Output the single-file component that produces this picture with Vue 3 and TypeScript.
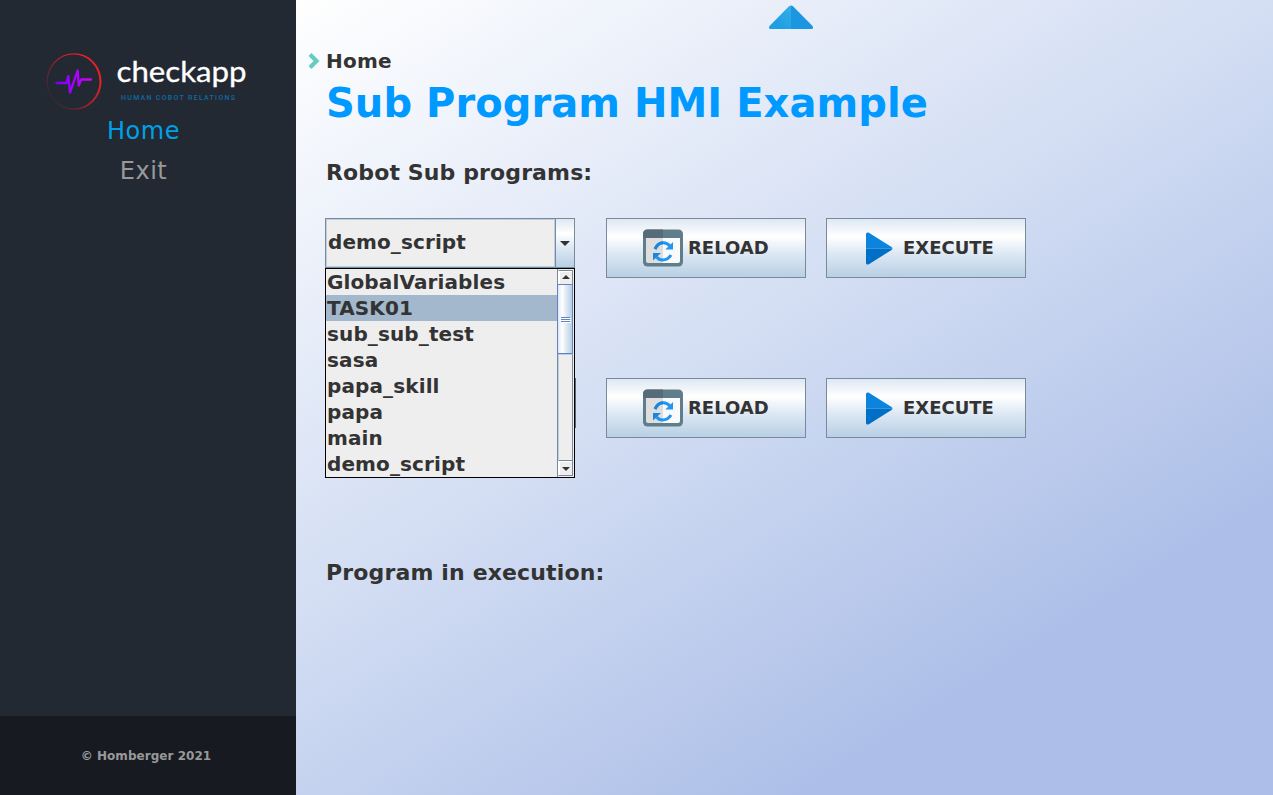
<script setup lang="ts">
import { ref } from 'vue'

const programs: string[] = ['GlobalVariables', 'TASK01', 'sub_sub_test', 'sasa', 'papa_skill', 'papa', 'main', 'demo_script']
const hovered = ref('TASK01')
const selected = ref('demo_script')
const open = ref(true)
const rows: number[] = [1, 2]

function choose(name: string) {
  selected.value = name
  open.value = false
}
</script>

<template>
  <div class="app">
    <aside class="sidebar">
      <svg class="logo" width="220" height="70" viewBox="36 44 220 70">
        <defs>
          <linearGradient id="ring" x1="0.1" y1="0.85" x2="0.85" y2="0.3">
            <stop offset="0" stop-color="#e01e26" stop-opacity="0.04" />
            <stop offset="0.5" stop-color="#e01e26" stop-opacity="0.65" />
            <stop offset="1" stop-color="#ee1f28" />
          </linearGradient>
          <linearGradient id="pulse" gradientUnits="userSpaceOnUse" x1="56" y1="80" x2="92" y2="80">
            <stop offset="0" stop-color="#7a00f0" />
            <stop offset="0.5" stop-color="#a400ff" />
            <stop offset="1" stop-color="#d800f5" />
          </linearGradient>
        </defs>
        <path fill-rule="evenodd" d="M46.500 81.500A27.500 28.300 0 1 1 101.500 81.500A27.500 28.300 0 1 1 46.500 81.500ZM47.700 81.500A25.900 27 0 1 0 99.500 81.500A25.900 27 0 1 0 47.700 81.500Z" fill="url(#ring)" />
        <path d="M56.500 83H66.500L68.300 76L70 92.500L77.700 70.500L78.700 85.500L81.300 79.500H91" fill="none" stroke="url(#pulse)" stroke-width="2.300" stroke-linejoin="round" stroke-linecap="round" />
        <text class="brand" x="116.500" y="82.300" textLength="130" lengthAdjust="spacingAndGlyphs">checkapp</text>
        <text class="tagline" x="121" y="100" textLength="114">HUMAN COBOT RELATIONS</text>
      </svg>
      <nav class="nav">
        <a class="nav-item active">Home</a>
        <a class="nav-item exit">Exit</a>
      </nav>
      <footer class="footer"><span>© Homberger 2021</span></footer>
    </aside>

    <main class="main">
      <svg class="collapse" width="46" height="26" viewBox="0 0 46 26">
        <defs>
          <linearGradient id="tri" x1="1" y1="0" x2="0.300" y2="0.700">
            <stop offset="0" stop-color="#37aee6" />
            <stop offset="1" stop-color="#1e9fe2" />
          </linearGradient>
        </defs>
        <path d="M23 0.400Q22 0.400 21 1.300L1.500 21Q0 24 2.500 24H23Z" fill="url(#tri)" />
        <path d="M23 0.400Q24 0.400 25 1.300L44.500 21Q46 24 43.500 24H23Z" fill="#1a97e0" />
      </svg>

      <div class="crumb">
        <svg class="chevron" width="12" height="16" viewBox="0 0 12 16"><path d="M2 1.500L8.500 8L2 14.500" fill="none" stroke="#65cbc4" stroke-width="4.200" /></svg>
        <span>Home</span>
      </div>
      <h1>Sub Program HMI Example</h1>
      <h2 class="robot">Robot Sub programs:</h2>

      <section v-for="row in rows" :key="row" class="row">
        <div class="combo" :class="{ second: row === 2 }">
          <div class="value">{{ row === 1 ? selected : '' }}</div>
          <button class="drop" @click="open = !open">
            <svg width="10" height="5" viewBox="0 0 10 5"><path d="M0 0H10L5 5Z" fill="#333" /></svg>
          </button>
          <div v-if="row === 1 && open" class="popup">
            <ul>
              <li v-for="p in programs" :key="p" :class="{ hover: p === hovered }" @mouseenter="hovered = p" @click="choose(p)">{{ p }}</li>
            </ul>
            <div class="scroll">
              <div class="step up"><svg width="8" height="4" viewBox="0 0 8 4"><path d="M0 4H8L4 0Z" fill="#333" /></svg></div>
              <div class="thumb"><i></i><i></i><i></i></div>
              <div class="track"></div>
              <div class="step down"><svg width="8" height="4" viewBox="0 0 8 4"><path d="M0 0H8L4 4Z" fill="#333" /></svg></div>
            </div>
          </div>
        </div>
        <button class="btn reload">
          <svg width="40" height="38" viewBox="0 0 40 38">
            <rect x="0" y="0.500" width="40" height="37" rx="4.500" fill="#607d8b" />
            <path d="M20 0.500H4.500Q0 0.500 0 5V9H20Z" fill="#546d79" />
            <path d="M3 9H20V34H5Q3 34 3 32Z" fill="#dedede" />
            <path d="M20 9H37V32Q37 34 35 34H20Z" fill="#fafafa" />
            <path d="M12 20Q15 13.800 20.500 13.800Q24 13.800 27 17" fill="none" stroke="#2196f3" stroke-width="3" />
            <path d="M30 13V20.500H22.300Z" fill="#2196f3" />
            <path d="M28 26Q25 31 19.500 31Q16 31 13.500 28" fill="none" stroke="#2196f3" stroke-width="3" />
            <path d="M10 31.500V24H18Z" fill="#1d86da" />
            <path d="M12 20Q15 13.800 20 13.800" fill="none" stroke="#1d86da" stroke-width="3" />
          </svg>
          <span>RELOAD</span>
        </button>
        <button class="btn execute">
          <svg width="27" height="33" viewBox="0 0 27 33">
            <path d="M0 16.500V2Q0 0 2.500 0.500L25.500 15Q26.500 15.800 26.500 16.500Z" fill="#0c84dd" />
            <path d="M0 16.500V31Q0 33 2.500 32.500L25.500 18Q26.500 17.200 26.500 16.500Z" fill="#006fc7" />
          </svg>
          <span>EXECUTE</span>
        </button>
      </section>

      <h2 class="status">Program in execution:</h2>
    </main>
  </div>
</template>

<style>
html, body { margin: 0; overflow: hidden; }
</style>

<style scoped>
.app { display: flex; width: 1273px; height: 795px; overflow: hidden; font-family: "DejaVu Sans", sans-serif; color: #333; }
.sidebar { width: 296px; background: #232932; display: flex; flex-direction: column; flex: none; }
.logo { margin: 44px 0 0 36px; display: block; overflow: visible; }
.brand { font-family: Lato, sans-serif; font-size: 28.5px; fill: #fff; stroke: #fff; stroke-width: 0.3px; }
.tagline { font-family: Roboto, sans-serif; font-weight: 500; font-size: 7px; fill: #1169a5; }
.nav { display: flex; flex-direction: column; width: 287px; }
.nav-item { height: 40px; line-height: 35px; text-align: center; font-size: 24px; letter-spacing: 0.5px; color: #999; }
.nav-item.active { color: #00a0e9; }
.footer { margin-top: auto; height: 79px; width: 292px; padding-right: 4px; background: #171a21; display: flex; align-items: center; justify-content: center; font-size: 12px; font-weight: bold; color: #999; letter-spacing: 0.04px; }
.main { position: relative; flex: 1; box-sizing: border-box; padding: 49px 0 0 29px; background: linear-gradient(148deg, #fff 0%, #d2ddf3 45%, #adbfe8 79%); }
.collapse { position: absolute; left: 472px; top: 5px; }
.crumb { display: flex; align-items: center; height: 24px; margin-left: -17px; font-size: 20px; font-weight: bold; letter-spacing: 0.2px; }
.chevron { margin-right: 6px; }
h1 { margin: 6px 0 0 1px; font-size: 40px; line-height: 48px; color: #0099ff; white-space: nowrap; letter-spacing: 0.05px; }
h2 { margin: 0; font-size: 22px; line-height: 28px; white-space: nowrap; }
.robot { margin: 32px 0 31px 1px; letter-spacing: 0.12px; }
.row { display: flex; height: 60px; margin-bottom: 100px; }
.row:last-of-type { margin-bottom: 0; }
.combo { position: relative; box-sizing: border-box; width: 250px; height: 50px; display: flex; border: 1px solid #7a8a99; background: #eee; margin-right: 31px; }
.combo.second { margin-left: 1px; margin-right: 30px; border-color: #5c6873; }
.value { flex: 1; box-sizing: border-box; border: 1px solid #b8cfe5; padding-left: 1px; line-height: 44px; font-size: 20px; font-weight: bold; letter-spacing: 0.1px; }
.drop { width: 19px; padding: 0; border: 0; border-left: 1px solid #7a8a99; display: flex; align-items: center; justify-content: center; background: linear-gradient(#dde8f3, #fff 30%, #dde8f3 60%, #b8cfe5); }
.popup { position: absolute; z-index: 2; left: -1px; top: 49px; box-sizing: border-box; width: 250px; height: 210px; border: 1px solid #000; background: #eee; display: flex; }
ul { list-style: none; margin: 0; padding: 0; flex: 1; }
li { height: 26px; line-height: 26px; padding-left: 1px; font-size: 20px; font-weight: bold; white-space: nowrap; letter-spacing: 0.12px; }
li.hover { background: #a3b8cc; }
.scroll { width: 15px; margin-right: 1px; padding: 1px 0; display: flex; flex-direction: column; border-left: 1px solid #7a8a99; }
.step { height: 14px; box-sizing: border-box; border: 1px solid #7a8a99; border-left-color: #fff; box-shadow: inset 1px 1px #fff; display: flex; align-items: center; justify-content: center; }
.step.up { border-bottom: 0; padding-bottom: 1px; }
.step.down { height: 16px; padding-top: 1px; }
.thumb { margin-left: -1px; height: 70px; box-sizing: border-box; border: 1px solid #6382bf; background: linear-gradient(90deg, #dde8f3, #fff 30%, #dde8f3 60%, #b8cfe5); display: flex; flex-direction: column; align-items: center; justify-content: center; gap: 1px; }
.thumb i { width: 9px; height: 1px; background: #6382bf; box-shadow: 1px 1px #fff; }
.track { flex: 1; border-left: 1px solid #b8cfe5; border-top: 1px solid #b8cfe5; border-right: 1px solid #7a8a99; }
.btn { box-sizing: border-box; width: 200px; height: 60px; margin-right: 20px; padding: 0; border: 1px solid #7a8a99; background: linear-gradient(#dde8f3, #fff 30%, #dde8f3 60%, #b8cfe5); display: flex; align-items: center; font-family: inherit; font-size: 18px; font-weight: bold; color: #333; }
.btn span { padding-bottom: 2px; }
.reload svg { margin-left: 36px; margin-right: 5px; }
.execute svg { margin-left: 39px; margin-right: 10px; }
.status { margin: 121px 0 0 1px; letter-spacing: 0.15px; }
</style>
